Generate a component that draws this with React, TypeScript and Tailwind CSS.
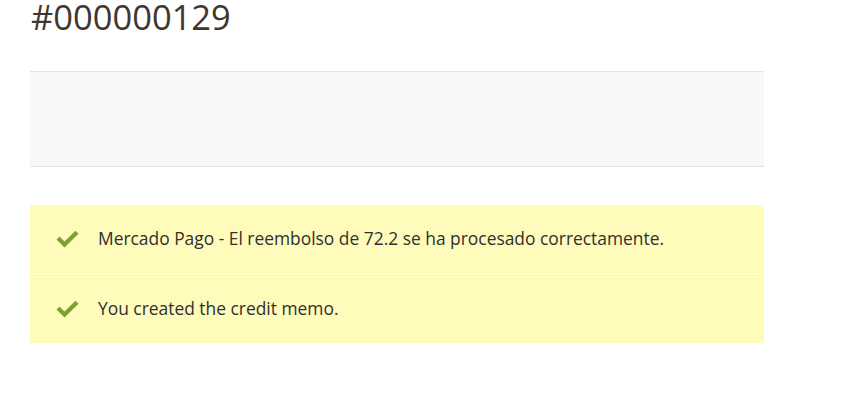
import React from "react";

function Check() {
  return (
    <svg width="25" height="18" viewBox="0 0 25 18" className="shrink-0">
      <path d="M1.5 9.5 L4.5 6.5 L9.5 11.5 L20.5 0.8 L23.5 3.8 L9.5 17.5 Z" fill="#79a22e" />
    </svg>
  );
}

function Msg({ text, tall }: { text: string; tall?: boolean }) {
  return (
    <div className={tall ? "flex items-center h-[69px] bg-[#fffbbb] pl-[25px] gap-[18px]" : "flex items-center h-[68px] bg-[#fffbbb] pl-[25px] gap-[18px]"}>
      <Check />
      <span className="text-[17.4px] leading-none text-[#303030]">{text}</span>
    </div>
  );
}

export default function App() {
  return (
    <div className="w-[866px] h-[408px] bg-white pl-[30px] pr-[102px]" style={{ fontFamily: '"Open Sans", sans-serif' }}>
      <h1 className="text-[34.5px] leading-none text-[#41362f] pl-[1px] h-[71px] whitespace-nowrap">#000000129</h1>
      <div className="h-[96px] bg-[#f8f8f8] border-y border-[#e3e3e3]" />
      <div className="mt-[38px] flex flex-col gap-px">
        <Msg text="Mercado Pago - El reembolso de 72.2 se ha procesado correctamente." />
        <Msg text="You created the credit memo." tall />
      </div>
    </div>
  );
}
